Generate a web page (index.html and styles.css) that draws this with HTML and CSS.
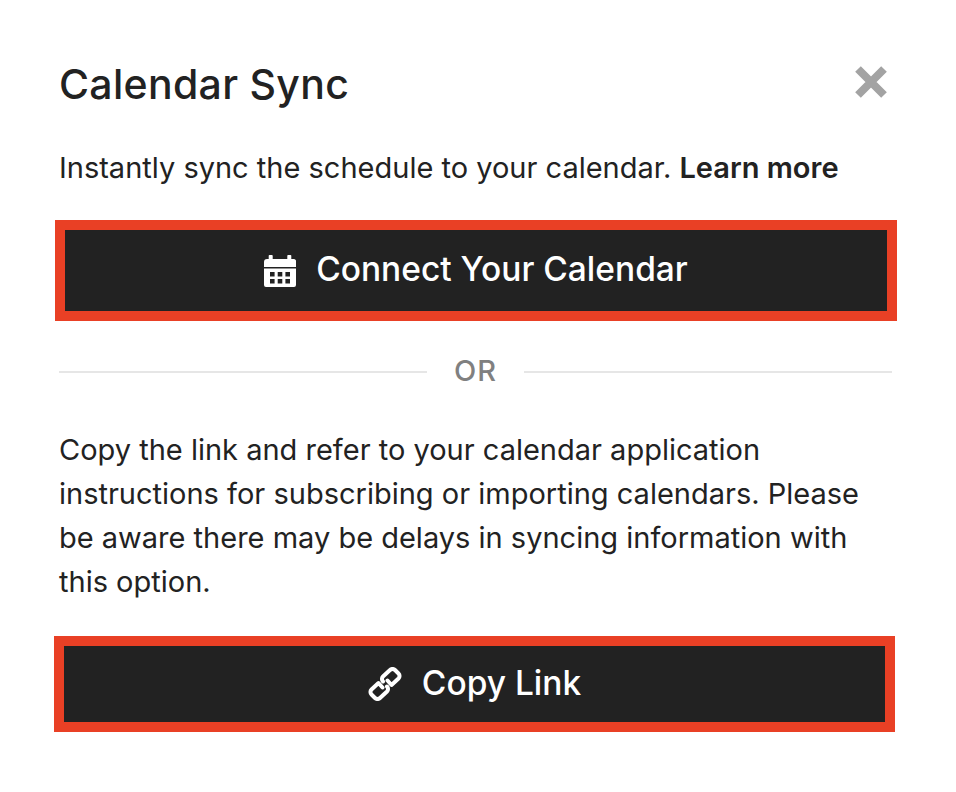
FILE: index.html

```html
<!DOCTYPE html>
<html lang="en">
<head>
    <meta charset="UTF-8">
    <meta name="viewport" content="width=device-width, initial-scale=1.0">
    <title>Calendar Sync</title>
    <link rel="stylesheet" href="styles.css">
</head>
<body>

<div class="modal">
    <div class="modal-header">
        <h1>Calendar Sync</h1>
        <svg class="close-icon" viewBox="0 0 34 34" aria-label="Close">
            <path d="M4 4 L30 30 M30 4 L4 30" stroke="#a3a3a3" stroke-width="8" fill="none"/>
        </svg>
    </div>

    <p class="intro">Instantly sync the schedule to your calendar. <strong>Learn more</strong></p>

    <button class="action action-connect">
        <svg class="calendar-icon" viewBox="0 0 32 32">
            <path fill="#fff" d="M5.5 0h2.4a.8.8 0 0 1 .8.8V4h14.6V.8a.8.8 0 0 1 .8-.8h2.4a.8.8 0 0 1 .8.8V4h2a3 3 0 0 1 3 3v5H0V7a3 3 0 0 1 3-3h1.7V.8a.8.8 0 0 1 .8-.8z"/>
            <path fill="#fff" fill-rule="evenodd" d="M0 13.5h32V30a2 2 0 0 1-2 2H2a2 2 0 0 1-2-2zM6 17v4.6h4.6V17zM13.7 17v4.6h4.6V17zM21.4 17v4.6H26V17zM6 24v4.6h4.6V24zM13.7 24v4.6h4.6V24zM21.4 24v4.6H26V24z"/>
        </svg>
        <span class="label">Connect Your Calendar</span>
    </button>

    <div class="divider"><span>OR</span></div>

    <p class="details">Copy the link and refer to your calendar application instructions for subscribing or importing calendars. Please be aware there may be delays in syncing information with this option.</p>

    <button class="action action-copy">
        <svg class="link-icon" viewBox="0 0 34 34">
            <g fill="none" stroke="#fff" stroke-width="4" stroke-linecap="round" stroke-linejoin="round">
                <path d="M14.5 20.5 L10.5 16 L3.5 22.5 a3.5 3.5 0 0 0 0 5 L7 31 a3.5 3.5 0 0 0 5 0 L19 24.5 a3.5 3.5 0 0 0 0-5"/>
                <path d="M19.5 13.5 L23.5 18 L30.5 11.5 a3.5 3.5 0 0 0 0-5 L27 3 a3.5 3.5 0 0 0-5 0 L15 9.5 a3.5 3.5 0 0 0 0 5"/>
            </g>
        </svg>
        <span class="label">Copy Link</span>
    </button>
</div>

</body>
</html>
```

FILE: styles.css

```css
:root {
    --dark: #222222;
    --accent: #e94025;
    --muted: #808080;
    --line: #e6e6e6;
}
* {
    box-sizing: border-box;
}
body {
    margin: 0;
    background: white;
    color: var(--dark);
    font-family: 'Inter', 'Liberation Sans', sans-serif;
}
.modal {
    width: 956px;
    padding: 60px 64px 0 59px;
}
.modal-header {
    display: flex;
    justify-content: space-between;
    align-items: center;
    height: 48px;
    padding-right: 4px;
}
h1 {
    margin: 0;
    font-size: 41px;
    font-weight: 500;
    letter-spacing: 0.3px;
}
.close-icon {
    width: 34px;
    height: 34px;
    margin-top: -4px;
}
p {
    margin: 0;
    font-size: 29px;
    line-height: 44px;
}
.intro {
    margin-top: 38px;
}
.intro strong {
    font-weight: 600;
}
.action {
    display: flex;
    justify-content: center;
    align-items: center;
    background: var(--dark);
    color: white;
    border: 10px solid var(--accent);
    font-family: inherit;
    font-size: 33.5px;
    font-weight: 500;
}
.action-connect {
    width: 842px;
    height: 101px;
    margin: 30px 0 0 -4px;
    gap: 20px;
}
.action-connect .label {
    margin-bottom: 4px;
}
.action-copy {
    width: 841px;
    height: 96px;
    margin: 32px 0 0 -5px;
    gap: 20px;
}
.action-copy .label {
    margin-bottom: 2px;
}
.calendar-icon {
    width: 32px;
    height: 32px;
}
.link-icon {
    width: 34px;
    height: 34px;
}
.divider {
    display: flex;
    align-items: center;
    gap: 27px;
    margin-top: 32px;
    height: 36px;
    color: var(--muted);
    font-size: 29px;
    font-weight: 500;
    letter-spacing: 1px;
}
.divider span {
    margin-bottom: 2px;
}
.divider::before,
.divider::after {
    content: "";
    flex: 1;
    height: 2px;
    margin-top: 1px;
    background: var(--line);
}
.details {
    margin-top: 39px;
}
```
